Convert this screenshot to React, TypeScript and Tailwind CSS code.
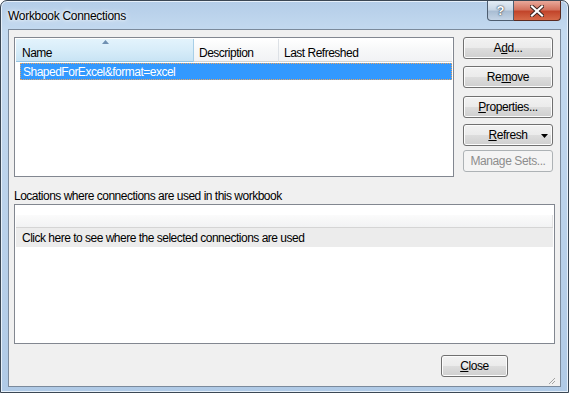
import React from 'react';

const font = { fontFamily: '"Liberation Sans", Arial, sans-serif' };

function Btn({ children, disabled, arrow, className = '' }: { children: React.ReactNode; disabled?: boolean; arrow?: boolean; className?: string }) {
  return (
    <div
      className={
        'relative flex h-[22px] items-center justify-center rounded-[3px] border text-[12px] tracking-[-0.4px] ' +
        (disabled
          ? 'border-[#adb2b5] bg-[#f4f4f4] text-[#8d8d8d]'
          : 'border-[#707070] bg-[linear-gradient(to_bottom,#f2f2f2_0%,#ebebeb_50%,#dddddd_51%,#cfcfcf_100%)] text-black shadow-[inset_0_0_0_1px_#fcfcfc]') +
        ' ' +
        className
      }
    >
      {children}
      {arrow && (
        <svg className="absolute right-[4px] top-[9px]" width="7" height="4" viewBox="0 0 7 4">
          <path d="M0 0h7L3.5 4z" fill="#000" />
        </svg>
      )}
    </div>
  );
}

export default function App() {
  return (
    <div style={font} className="h-[393px] w-[569px] overflow-hidden bg-white">
      <div className="flex h-[393px] w-[569px] flex-col rounded-t-[7px] border border-[#3b4754] bg-[linear-gradient(to_bottom,#b4cde8_0%,#c4daf0_8%,#bdd4ec_40%,#b0cae6_100%)] shadow-[inset_0_0_0_1px_#e6f0fa]">
        {/* title bar */}
        <div className="flex h-[28px] shrink-0 items-start">
          <div className="pl-[7px] pt-[6px] text-[12px] tracking-[-0.3px] text-black [text-shadow:0_0_6px_#ffffff,0_0_3px_#ffffff]">Workbook Connections</div>
          <div className="ml-auto mr-[7px] flex h-[20px]">
            <div className="flex w-[27px] items-center justify-center rounded-bl-[4px] border border-t-0 border-[#4d5d70] bg-[linear-gradient(to_bottom,#e4ecf5_0%,#c9d7e6_45%,#a9bdd3_55%,#c4d4e6_100%)] text-[13px] font-bold text-white [text-shadow:0_0_2px_#2b3a4b,0_0_1px_#2b3a4b]">
              ?
            </div>
            <div className="flex w-[47px] items-center justify-center rounded-br-[4px] border border-l-0 border-t-0 border-[#5a2a20] bg-[linear-gradient(to_bottom,#e9a99b_0%,#d4735f_45%,#c2452b_55%,#d66a49_100%)]">
              <svg width="14" height="12" viewBox="0 0 14 12">
                <path d="M2 1.5l10 9M12 1.5l-10 9" stroke="#3a2420" strokeWidth="4" strokeLinecap="square" />
                <path d="M2 1.5l10 9M12 1.5l-10 9" stroke="#fff" strokeWidth="2.2" strokeLinecap="square" />
              </svg>
            </div>
          </div>
        </div>

        {/* client area */}
        <div className="mx-[7px] mb-[7px] flex flex-1 flex-col border border-[#7b8a9c] bg-[#f0f0f0] pl-[5px] pr-[4px] pt-[7px] text-[12px] tracking-[-0.5px]">
          <div className="flex gap-[9px]">
            {/* connections list */}
            <div className="flex h-[140px] w-[440px] flex-col border border-[#828790] bg-white p-px">
              <div className="flex h-[23px] text-black">
                <div className="relative flex w-[178px] items-center border-r border-[#a8cfe8] bg-[linear-gradient(to_bottom,#e3f3fc_0%,#d8edf9_45%,#c7e3f4_100%)] pl-[6px] pt-[4px] shadow-[inset_0_-1px_0_#96c5e4]">
                  Name
                  <svg className="absolute left-[86px] top-[1px]" width="7" height="4" viewBox="0 0 7 4">
                    <path d="M0 4L3.5 0 7 4z" fill="#6f90b2" />
                  </svg>
                </div>
                <div className="flex w-[85px] items-center border-r border-[#dde1e6] bg-[linear-gradient(to_bottom,#ffffff_0%,#f7f8f9_45%,#f1f2f4_100%)] pl-[5px] pt-[4px] shadow-[inset_0_-1px_0_#d5d5d5]">
                  Description
                </div>
                <div className="flex flex-1 items-center bg-[linear-gradient(to_bottom,#ffffff_0%,#f7f8f9_45%,#f1f2f4_100%)] pl-[5px] pt-[4px] shadow-[inset_0_-1px_0_#d5d5d5]">
                  Last Refreshed
                </div>
              </div>
              <div className="ml-[4px] mt-[1px] flex h-[17px] items-center border border-dotted border-[#e9a360] bg-[#3399ff] pl-[2px] text-white">
                ShapedForExcel&amp;format=excel
              </div>
            </div>

            {/* buttons */}
            <div className="flex w-[90px] flex-col">
              <Btn>
                A<u>d</u>d...
              </Btn>
              <Btn className="mt-[7px]">
                Re<u>m</u>ove
              </Btn>
              <Btn className="mt-[8px]">
                <u>P</u>roperties...
              </Btn>
              <Btn arrow className="mt-[6px]">
                <u>R</u>efresh
              </Btn>
              <Btn disabled className="mt-[4px]">
                Manage Sets...
              </Btn>
            </div>
          </div>

          <div className="mt-[10px] h-[15px] text-black">Locations where connections are used in this workbook</div>

          {/* locations list */}
          <div className="mt-[2px] flex h-[140px] w-[541px] flex-col border border-[#828790] bg-white p-px">
            <div className="mt-[9px] h-[13px] bg-[linear-gradient(to_bottom,#fbfbfb_0%,#f1f2f3_100%)] shadow-[inset_0_-1px_0_#d5d5d5,inset_-1px_0_0_#e2e2e2]"></div>
            <div className="flex h-[19px] items-center bg-[#ececec] pl-[6px] text-black">
              Click here to see where the selected connections are used
            </div>
          </div>

          <div className="mt-[11px] flex justify-end pr-[48px]">
            <Btn className="w-[67px]">
              <u>C</u>lose
            </Btn>
          </div>
          <div className="mt-auto flex justify-end pb-px">
            <svg width="8" height="8" viewBox="0 0 8 8">
              <path d="M7 1L1 7M7 4L4 7" stroke="#a3a3a3" strokeWidth="1" />
            </svg>
          </div>
        </div>
      </div>
    </div>
  );
}
